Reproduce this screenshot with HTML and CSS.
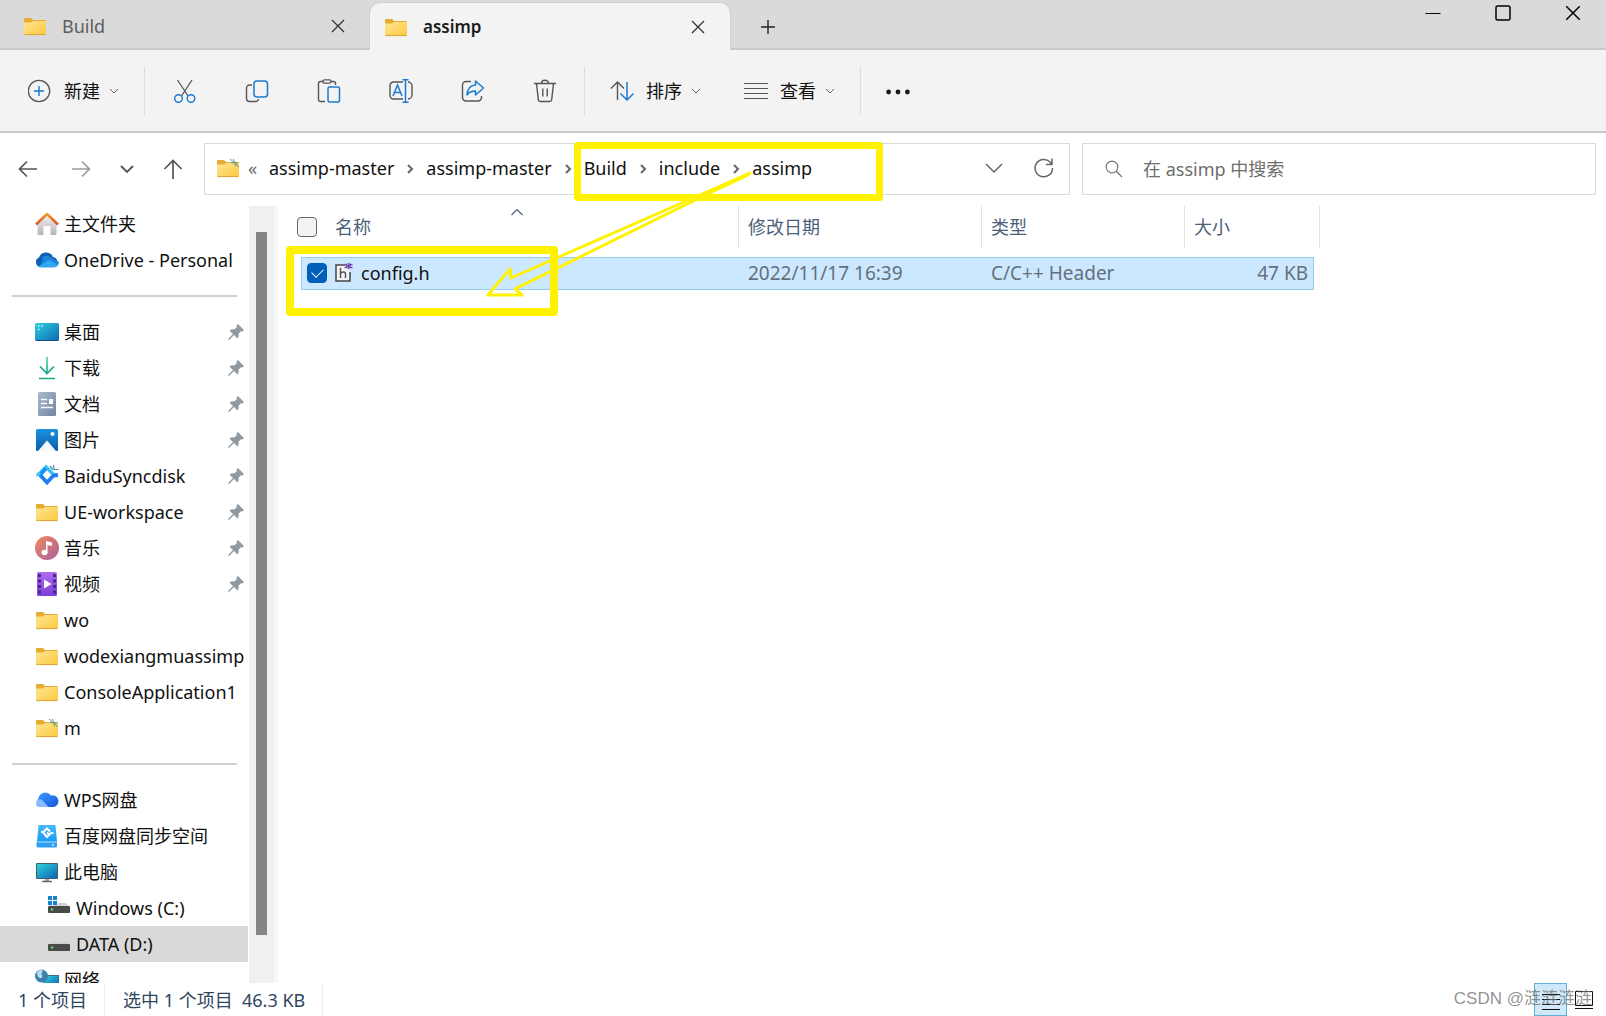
FILE: index.html
```html
<!DOCTYPE html>
<html lang="zh-CN">
<head>
<meta charset="utf-8">
<title>assimp</title>
<link rel="stylesheet" href="styles.css">
</head>
<body>
<svg class="sprite" aria-hidden="true">
  <defs>
    <linearGradient id="g-folder" x1="0" y1="0" x2="1" y2="1"><stop offset="0" stop-color="#ffe694"/><stop offset="1" stop-color="#fbc83d"/></linearGradient>
    <linearGradient id="g-desk" x1="0" y1="0" x2="1" y2="1"><stop offset="0" stop-color="#2fd0dc"/><stop offset="1" stop-color="#0c66b4"/></linearGradient>
    <linearGradient id="g-home" x1="0" y1="0" x2="0" y2="1"><stop offset="0" stop-color="#f2f2f2"/><stop offset="1" stop-color="#b5b5b8"/></linearGradient>
    <linearGradient id="g-roof" x1="0" y1="0" x2="0" y2="1"><stop offset="0" stop-color="#f59a2c"/><stop offset="1" stop-color="#d3552a"/></linearGradient>
    <linearGradient id="g-down" x1="0" y1="0" x2="0" y2="1"><stop offset="0" stop-color="#3fc9a2"/><stop offset="1" stop-color="#0a9c7c"/></linearGradient>
    <linearGradient id="g-doc" x1="0" y1="0" x2="1" y2="1"><stop offset="0" stop-color="#a9bacb"/><stop offset="1" stop-color="#6f87a3"/></linearGradient>
    <linearGradient id="g-pic" x1="0" y1="0" x2="0" y2="1"><stop offset="0" stop-color="#1a93e0"/><stop offset="1" stop-color="#0a5cab"/></linearGradient>
    <linearGradient id="g-music" x1="0" y1="0" x2="1" y2="1"><stop offset="0" stop-color="#f0885a"/><stop offset="1" stop-color="#a9609f"/></linearGradient>
    <linearGradient id="g-video" x1="0" y1="0" x2="0" y2="1"><stop offset="0" stop-color="#b06cf0"/><stop offset="1" stop-color="#7b3fd6"/></linearGradient>
    <linearGradient id="g-wps" x1="0" y1="0" x2="1" y2="1"><stop offset="0" stop-color="#3f9bff"/><stop offset="1" stop-color="#1557dd"/></linearGradient>
    <linearGradient id="g-bdisk" x1="0" y1="0" x2="0" y2="1"><stop offset="0" stop-color="#4db8fa"/><stop offset="1" stop-color="#169cf5"/></linearGradient>
  </defs>

  <symbol id="folder" viewBox="0 0 24 24">
    <path d="M1 5a1 1 0 0 1 1-1h6l2 2h12a1 1 0 0 1 1 1v3H1z" fill="#e5ad33"/>
    <path d="M1 8.500h7l2-1.500h13v13a1 1 0 0 1-1 1H2a1 1 0 0 1-1-1z" fill="url(#g-folder)"/>
    <path d="M1.500 20.600h21" stroke="#dca43a"/>
  </symbol>
  <symbol id="folder-sync" viewBox="0 0 24 24">
    <use href="#folder"/>
    <path d="M14 3l4 3.500M23 11l-4-4M17.500 3l1 3.500 3.500.5M15 6.500l4 .5.500 3.500" fill="none" stroke="#5f9a8e" stroke-width="1"/>
  </symbol>
  <symbol id="close" viewBox="0 0 16 16"><path d="M2 2l12 12M14 2L2 14" fill="none" stroke="currentColor" stroke-width="1.300"/></symbol>
  <symbol id="add" viewBox="0 0 16 16"><path d="M8 1v14M1 8h14" fill="none" stroke="currentColor" stroke-width="1.400"/></symbol>
  <symbol id="min" viewBox="0 0 16 16"><path d="M.500 8.500h15" stroke="currentColor"/></symbol>
  <symbol id="max" viewBox="0 0 16 16"><rect x="1" y="1" width="14" height="14" rx="1.500" fill="none" stroke="currentColor" stroke-width="1.500"/></symbol>
  <symbol id="chev" viewBox="0 0 12 12"><path d="M2 4l4 4 4-4" fill="none" stroke="currentColor" stroke-width="1"/></symbol>
  <symbol id="sort-up" viewBox="0 0 12 12"><path d="M.500 9L6 3.500 11.500 9" fill="none" stroke="currentColor" stroke-width="1.200"/></symbol>
  <symbol id="sep" viewBox="0 0 12 12"><path d="M4 2l4 4-4 4" fill="none" stroke="currentColor" stroke-width="2"/></symbol>

  <symbol id="new" viewBox="0 0 24 24"><circle cx="11" cy="12" r="10.700" fill="none" stroke="#555" stroke-width="1.300"/><path d="M11 7v10M6 12h10" stroke="#1a7ad0" stroke-width="1.400"/></symbol>
  <symbol id="cut" viewBox="0 0 24 24"><path d="M4.500 1l10.500 16M19 1L8.500 17" fill="none" stroke="#555" stroke-width="1.300"/><g fill="#f3f3f3" stroke="#1a7ad0" stroke-width="1.400"><circle cx="5.500" cy="19.500" r="3.800"/><circle cx="18" cy="19.500" r="3.800"/></g></symbol>
  <symbol id="copy" viewBox="0 0 24 24"><path d="M7 6H4.500a3 3 0 0 0-3 3v10.500a3 3 0 0 0 3 3h6a3 3 0 0 0 3-2.500" fill="none" stroke="#555" stroke-width="1.400"/><rect x="9" y="2" width="13.500" height="16" rx="3" fill="none" stroke="#1a7ad0" stroke-width="1.500"/></symbol>
  <symbol id="paste" viewBox="0 0 24 24"><path d="M8 22.500H3.500a2 2 0 0 1-2-2v-16a2 2 0 0 1 2-2H6m8 0h2.500a2 2 0 0 1 2 2V6" fill="none" stroke="#555" stroke-width="1.400"/><rect x="6" y=".800" width="8" height="3.400" rx="1.700" fill="none" stroke="#555" stroke-width="1.300"/><rect x="11" y="8" width="11.500" height="15" rx="1.500" fill="none" stroke="#1a7ad0" stroke-width="1.500"/></symbol>
  <symbol id="rename" viewBox="0 0 24 24"><path d="M14 3H4.500a3.500 3.500 0 0 0-3.500 3.500v10a3.500 3.500 0 0 0 3.500 3.500H14M19 3a4 4 0 0 1 4 4v9a4 4 0 0 1-4 4" fill="none" stroke="#555" stroke-width="1.400"/><path d="M4 17L8.500 6 13 17M5.500 13.500h6M16.500 1v22M13.500.700h6M13.500 23.300h6" fill="none" stroke="#1a7ad0" stroke-width="1.500"/></symbol>
  <symbol id="share" viewBox="0 0 24 24"><path d="M10 2.500H5a3.500 3.500 0 0 0-3.500 3.500v12.500A3.500 3.500 0 0 0 5 22h12a3.500 3.500 0 0 0 3.500-3.500V17" fill="none" stroke="#555" stroke-width="1.400"/><path d="M14.500 2l8 7-8 7v-4c-4 0-6.500 1-8.500 4 .3-6 3-9.500 8.500-10z" fill="none" stroke="#1a7ad0" stroke-width="1.500" stroke-linejoin="round"/></symbol>
  <symbol id="trash" viewBox="0 0 24 24"><path d="M1 4.500h22M8.500 4a3.500 2.800 0 0 1 7 0M3.500 4.500l1.800 16.200a2 2 0 0 0 2 1.800h9.400a2 2 0 0 0 2-1.800L20.500 4.500M9.800 9.500v8M14.200 9.500v8" fill="none" stroke="#555" stroke-width="1.400"/></symbol>
  <symbol id="sort" viewBox="0 0 24 24"><path d="M1 9.500L7.500 3 14 9.500M7.500 3v18" fill="none" stroke="#555" stroke-width="1.400"/><path d="M10.500 14.500L17 21l6.500-6.500M17 21V3" fill="none" stroke="#1a7ad0" stroke-width="1.500"/></symbol>
  <symbol id="view" viewBox="0 0 24 24"><path d="M0 4.500h24M0 9.500h24M0 14.500h24M0 19.500h24" stroke="#555" stroke-width="1.200"/></symbol>
  <symbol id="dots" viewBox="0 0 24 24"><g fill="#1b1b1b"><circle cx="2.600" cy="13" r="2.400"/><circle cx="12" cy="13" r="2.400"/><circle cx="21.400" cy="13" r="2.400"/></g></symbol>

  <symbol id="back" viewBox="0 0 20 20"><path d="M19 10H2M9 2.500L1.500 10 9 17.500" fill="none" stroke="currentColor" stroke-width="1.700"/></symbol>
  <symbol id="fwd" viewBox="0 0 20 20"><path d="M1 10h17M11 2.500l7.500 7.500-7.500 7.500" fill="none" stroke="currentColor" stroke-width="1.700"/></symbol>
  <symbol id="up" viewBox="0 0 20 20"><path d="M10 20V2M1.500 10L10 1.500 18.500 10" fill="none" stroke="currentColor" stroke-width="1.700"/></symbol>
  <symbol id="down" viewBox="0 0 20 20"><path d="M4 7l6 6 6-6" fill="none" stroke="currentColor" stroke-width="1.900"/></symbol>
  <symbol id="drop" viewBox="0 0 20 20"><path d="M2 6l8 8 8-8" fill="none" stroke="currentColor" stroke-width="1.500"/></symbol>
  <symbol id="refresh" viewBox="0 0 20 20"><path d="M18.500 10A8.700 8.700 0 1 1 16 4l1.500 2M18 .500V6.500h-6" fill="none" stroke="currentColor" stroke-width="1.500"/></symbol>
  <symbol id="search" viewBox="0 0 18 18"><circle cx="7" cy="7" r="5.800" fill="none" stroke="currentColor" stroke-width="1.200"/><path d="M11.300 11.300L17 17" stroke="currentColor" stroke-width="1.300"/></symbol>

  <symbol id="home" viewBox="0 0 24 24"><path d="M2.500 11L12 2.500 21.500 11v11a1 1 0 0 1-1 1H15.500v-9h-7v9H3.500a1 1 0 0 1-1-1z" fill="url(#g-home)"/><path d="M1 12.500L12 2l11 10.500" fill="none" stroke="url(#g-roof)" stroke-width="2.600" stroke-linejoin="round"/></symbol>
  <symbol id="onedrive" viewBox="0 0 24 24"><path d="M5 19a5 5 0 0 1-1-9.500A7.500 7.500 0 0 1 18 9a5.200 5.200 0 0 1 1 10z" fill="#0f5fb8"/><path d="M8 8.500c4-2 8 0 10 2L24 14a5 5 0 0 1-5 5H6z" fill="#1a83dc"/><path d="M3 18.500L14 12l9 5a5 5 0 0 1-4 2.500H5z" fill="#2fa7f2"/></symbol>
  <symbol id="desktop" viewBox="0 0 24 24"><rect y="3" width="24" height="18" rx="1.500" fill="url(#g-desk)"/><path d="M3 6h1.500M3 9.500h1.500M6.500 6H8" stroke="#c9fbff" stroke-width="1.500"/><path d="M1 20.500h22" stroke="#0d4f83"/></symbol>
  <symbol id="download" viewBox="0 0 24 24"><path d="M11.250 1h1.500v15.500h-1.500z" fill="url(#g-down)"/><path d="M5 10.500l7 7 7-7M4 22.500h16" fill="none" stroke="#18ab8a" stroke-width="1.700"/></symbol>
  <symbol id="document" viewBox="0 0 24 24"><rect x="3" y="0" width="18" height="24" rx="1.500" fill="url(#g-doc)"/><path d="M6 7.500h6M6 11.500h6M6 15.500h12" stroke="#fff" stroke-width="1.500"/><rect x="14" y="7" width="4" height="5" fill="#fff"/></symbol>
  <symbol id="picture" viewBox="0 0 24 24"><rect x="1" y="1" width="22" height="22" rx="1.500" fill="url(#g-pic)"/><path d="M3 23l9-10.500L21 23z" fill="#f2f8ff"/><circle cx="17.500" cy="6" r="2" fill="#fff"/></symbol>
  <symbol id="baidu" viewBox="0 0 24 24"><path d="M1.500 10.500c3 .5 3-1 5-3L11 3l8 8" fill="none" stroke="#39c2f5" stroke-width="3.600"/><path d="M5 11l7 7.500 6.500-7 4.500-.5" fill="none" stroke="#1f7ff0" stroke-width="3.800"/><path d="M11 4.500L6 10" stroke="#1a8df5" stroke-width="3.500"/><path d="M15 2l3 3.500M18.500 1l.500 4.500h4.500" fill="none" stroke="#4a93a8" stroke-width="1.200"/></symbol>
  <symbol id="music" viewBox="0 0 24 24"><circle cx="12" cy="12" r="12" fill="url(#g-music)"/><ellipse cx="9.500" cy="16.500" rx="3" ry="2.700" fill="#fff"/><path d="M11 5l6 1.500v3.500l-4.500-1v8H11z" fill="#fff"/></symbol>
  <symbol id="video" viewBox="0 0 24 24"><rect x="2" y="0" width="20" height="24" rx="1.500" fill="url(#g-video)"/><path d="M4.500 2v21M19.500 2v21" stroke="#4a2390" stroke-width="3" stroke-dasharray="3 2.500"/><path d="M9 7.500l7.500 4.500L9 16.500z" fill="#fff"/></symbol>
  <symbol id="wps" viewBox="0 0 24 24"><path d="M4 17a6.500 6.500 0 0 1-.5-7A7 7 0 0 1 16 7.500a5.500 5.500 0 0 1 3 11.500H9z" fill="url(#g-wps)"/><path d="M1 15.500a4 4 0 0 1 6-3.700L13.500 19H4.500A3.500 3.500 0 0 1 1 15.500z" fill="#86bcff"/></symbol>
  <symbol id="bdisk" viewBox="0 0 24 24"><path d="M3.500 1h17l1.500 17H2z" fill="url(#g-bdisk)"/><rect x="1.500" y="17.500" width="20.500" height="6" rx="1.500" fill="#2f9ff2"/><path d="M2.500 18h19" stroke="#b9e2ff"/><path d="M6 8h2.500L12 4.500l3 3M8.500 9l3.500 4 4-4h2.500M12 8.500l2 2" fill="none" stroke="#fff" stroke-width="2"/><circle cx="18" cy="21" r="1" fill="#d6f3ff"/></symbol>
  <symbol id="pc" viewBox="0 0 24 24"><rect x="1" y="3" width="22" height="16" rx="1" fill="#46606f"/><rect x="2" y="4" width="20" height="14" fill="url(#g-desk)"/><path d="M10 19h4v2h-4z" fill="#9aa4ab"/><path d="M7 21.500h10" stroke="#5d686f" stroke-width="1.500"/></symbol>
  <symbol id="drive" viewBox="0 0 24 24"><path d="M4 10h16l2.500 4h-21z" fill="#d0d0d3"/><rect x="1" y="12" width="22" height="7" rx="1" fill="#4a4a4a"/><circle cx="5" cy="15.500" r="1.300" fill="#4ddb6a"/></symbol>
  <symbol id="drive-win" viewBox="0 0 24 24"><path d="M4 7h15l3.500 4h-21z" fill="#d5d5d9"/><rect x="1" y="10" width="22" height="7" rx="1" fill="#4a4a4a"/><circle cx="5" cy="13.500" r="1.300" fill="#4ddb6a"/><path d="M.500-.500h10V9h-10z" fill="#fff"/><path d="M1 0h4v4H1zM6 0h4v4H6zM1 5h4v4H1zM6 5h4v4H6z" fill="#1681d2"/></symbol>
  <symbol id="network" viewBox="0 0 24 24"><rect x="8" y="7" width="16" height="12" fill="#3d6e86"/><rect x="9" y="8" width="14" height="10" fill="url(#g-desk)"/><circle cx="6.500" cy="8" r="6.500" fill="#3b82ad"/><path d="M2 4.500c3-4 7-3 5 0s2 3 0 5-5-1-5-5z" fill="#b9dcec"/></symbol>
  <symbol id="pin" viewBox="0 0 16 16"><path d="M10 0l6 6-1.500 1.500-1.500-.3-2.500 2.500c.5 2 0 3.500-1.200 4.800L6 11 1.500 15.500 0 16l.5-1.500L5 10 1.500 6.700C3 5.500 4.500 5 6.300 5.500L8.800 3l-.3-1.500z" fill="#929aa1"/></symbol>
  <symbol id="hfile" viewBox="0 0 20 20"><path d="M11 2H2v16h14V9" fill="#f4f4f6" stroke="#444" stroke-width="1.500"/><path d="M6.500 5v10M6.500 10.500c1.500-2 5-2 5 .5v4" fill="none" stroke="#555" stroke-width="1.500"/><path d="M10.500 1.500h2v3h-2M13 3h2M18.500 1.500h-2.500v3h2.500M14.500 0v6" fill="none" stroke="#7a4bb5" stroke-width="1.500"/></symbol>
</svg>

<div class="window">
  <header class="titlebar">
    <div class="tab">
      <svg class="i24"><use href="#folder"/></svg><span class="tab-name">Build</span>
      <button class="plain" aria-label="关闭标签页"><svg class="i16"><use href="#close"/></svg></button>
    </div>
    <div class="tab tab-active">
      <svg class="i24"><use href="#folder"/></svg><span class="tab-name">assimp</span>
      <button class="plain" aria-label="关闭标签页"><svg class="i16"><use href="#close"/></svg></button>
    </div>
    <button class="plain tab-add" aria-label="新标签页"><svg class="i16"><use href="#add"/></svg></button>
    <div class="winctl">
      <button class="plain" aria-label="最小化"><svg class="i16"><use href="#min"/></svg></button>
      <button class="plain" aria-label="最大化"><svg class="i16"><use href="#max"/></svg></button>
      <button class="plain" aria-label="关闭"><svg class="i16 x"><use href="#close"/></svg></button>
    </div>
  </header>

  <div class="toolbar" role="toolbar">
    <button class="plain tool"><svg class="i24"><use href="#new"/></svg>新建<svg class="i12"><use href="#chev"/></svg></button>
    <span class="rule"></span>
    <button class="plain tool-icon" aria-label="剪切"><svg class="i24"><use href="#cut"/></svg></button>
    <button class="plain tool-icon" aria-label="复制"><svg class="i24"><use href="#copy"/></svg></button>
    <button class="plain tool-icon" aria-label="粘贴"><svg class="i24"><use href="#paste"/></svg></button>
    <button class="plain tool-icon" aria-label="重命名"><svg class="i24"><use href="#rename"/></svg></button>
    <button class="plain tool-icon" aria-label="共享"><svg class="i24"><use href="#share"/></svg></button>
    <button class="plain tool-icon" aria-label="删除"><svg class="i24"><use href="#trash"/></svg></button>
    <span class="rule"></span>
    <button class="plain tool"><svg class="i24"><use href="#sort"/></svg>排序<svg class="i12"><use href="#chev"/></svg></button>
    <button class="plain tool"><svg class="i24"><use href="#view"/></svg>查看<svg class="i12"><use href="#chev"/></svg></button>
    <span class="rule"></span>
    <button class="plain tool-icon tool-more" aria-label="更多"><svg class="i24"><use href="#dots"/></svg></button>
  </div>

  <div class="navrow">
    <div class="navbtns">
      <button class="plain" aria-label="后退"><svg class="i20"><use href="#back"/></svg></button>
      <button class="plain dim" aria-label="前进"><svg class="i20"><use href="#fwd"/></svg></button>
      <button class="plain" aria-label="最近"><svg class="i20"><use href="#down"/></svg></button>
      <button class="plain" aria-label="向上"><svg class="i20"><use href="#up"/></svg></button>
    </div>
    <div class="address">
      <svg class="i24"><use href="#folder-sync"/></svg>
      <span class="more">«</span>
      <a href="#">assimp-master</a><svg class="sep"><use href="#sep"/></svg>
      <a href="#">assimp-master</a><svg class="sep"><use href="#sep"/></svg>
      <a href="#">Build</a><svg class="sep"><use href="#sep"/></svg>
      <a href="#">include</a><svg class="sep"><use href="#sep"/></svg>
      <a href="#">assimp</a>
      <div class="address-end">
        <button class="plain" aria-label="以前的位置"><svg class="i20"><use href="#drop"/></svg></button>
        <button class="plain" aria-label="刷新"><svg class="i20"><use href="#refresh"/></svg></button>
      </div>
    </div>
    <label class="search">
      <svg class="i18"><use href="#search"/></svg>
      <input type="text" placeholder="在 assimp 中搜索" aria-label="在 assimp 中搜索">
    </label>
  </div>

  <div class="body">
    <nav class="side">
      <a href="#"><svg class="i24"><use href="#home"/></svg>主文件夹</a>
      <a href="#"><svg class="i24"><use href="#onedrive"/></svg>OneDrive - Personal</a>
      <hr>
      <a href="#"><svg class="i24"><use href="#desktop"/></svg>桌面<svg class="pin"><use href="#pin"/></svg></a>
      <a href="#"><svg class="i24"><use href="#download"/></svg>下载<svg class="pin"><use href="#pin"/></svg></a>
      <a href="#"><svg class="i24"><use href="#document"/></svg>文档<svg class="pin"><use href="#pin"/></svg></a>
      <a href="#"><svg class="i24"><use href="#picture"/></svg>图片<svg class="pin"><use href="#pin"/></svg></a>
      <a href="#"><svg class="i24"><use href="#baidu"/></svg>BaiduSyncdisk<svg class="pin"><use href="#pin"/></svg></a>
      <a href="#"><svg class="i24"><use href="#folder"/></svg>UE-workspace<svg class="pin"><use href="#pin"/></svg></a>
      <a href="#"><svg class="i24"><use href="#music"/></svg>音乐<svg class="pin"><use href="#pin"/></svg></a>
      <a href="#"><svg class="i24"><use href="#video"/></svg>视频<svg class="pin"><use href="#pin"/></svg></a>
      <a href="#"><svg class="i24"><use href="#folder"/></svg>wo</a>
      <a href="#"><svg class="i24"><use href="#folder"/></svg>wodexiangmuassimp</a>
      <a href="#"><svg class="i24"><use href="#folder"/></svg>ConsoleApplication1</a>
      <a href="#"><svg class="i24"><use href="#folder-sync"/></svg>m</a>
      <hr>
      <a href="#"><svg class="i24"><use href="#wps"/></svg>WPS网盘</a>
      <a href="#"><svg class="i24"><use href="#bdisk"/></svg>百度网盘同步空间</a>
      <a href="#"><svg class="i24"><use href="#pc"/></svg>此电脑</a>
      <a href="#" class="sub"><svg class="i24"><use href="#drive-win"/></svg>Windows (C:)</a>
      <a href="#" class="sub current"><svg class="i24"><use href="#drive"/></svg>DATA (D:)</a>
      <a href="#"><svg class="i24"><use href="#network"/></svg>网络</a>
    </nav>
    <div class="scroll"><div class="thumb"></div></div>
    <main class="files">
      <table>
        <thead>
          <tr>
            <th class="name"><input type="checkbox" aria-label="全选">名称<svg class="i12 asc"><use href="#sort-up"/></svg></th>
            <th>修改日期</th>
            <th>类型</th>
            <th>大小</th>
          </tr>
        </thead>
        <tbody>
          <tr>
            <td class="name"><input type="checkbox" aria-label="config.h" checked><svg class="i20"><use href="#hfile"/></svg>config.h</td>
            <td>2022/11/17 16:39</td>
            <td>C/C++ Header</td>
            <td class="size">47 KB</td>
          </tr>
        </tbody>
      </table>
    </main>
  </div>

  <footer class="status">
    <span class="cell">1 个项目</span>
    <span class="cell">选中 1 个项目&nbsp; 46.3 KB</span>
    <div class="modes">
      <button class="plain on" aria-label="详细信息"><svg class="i20"><path d="M1 4.500h18M1 9.500h18M1 14.500h18M1 19.500h18" stroke="#111" stroke-width="1"/></svg></button>
      <button class="plain" aria-label="大图标"><svg class="i20"><path d="M1.500 1.500h17v14h-17zM1 18.500h18" fill="none" stroke="#111" stroke-width="1"/></svg></button>
    </div>
    <span class="mark">CSDN @涟涟涟涟</span>
  </footer>

  <svg class="notes" width="900" height="330" fill="none" stroke="#fff200" stroke-linejoin="round" aria-hidden="true">
    <rect x="577.500" y="145.500" width="302" height="52" stroke-width="7"/>
    <rect x="290" y="250" width="264" height="62" stroke-width="8"/>
    <path d="M750 173L511 278l-1-9-22 26h34l-7-6z" stroke-width="3"/>
    <path d="M749 174l-60 28" stroke-width="4"/>
  </svg>
</div>
</body>
</html>
```
FILE: styles.css
```css
* { box-sizing: border-box; }

body {
  margin: 0;
  background: #fff;
  color: #111;
  font: 18px/24px "Noto Sans", "Noto Sans CJK SC", sans-serif;
}

svg { flex: none; display: block; }
a { color: inherit; text-decoration: none; }

.sprite { position: absolute; width: 0; height: 0; }
.i12 { width: 12px; height: 12px; }
.i16 { width: 16px; height: 16px; }
.i18 { width: 18px; height: 18px; }
.i20 { width: 20px; height: 20px; }
.i24 { width: 24px; height: 24px; }

.plain {
  display: flex;
  align-items: center;
  justify-content: center;
  padding: 0;
  border: 0;
  background: none;
  color: inherit;
  font: inherit;
}

.window {
  position: relative;
  display: flex;
  flex-direction: column;
  height: 100vh;
  overflow: hidden;
}

/* Tabs */
.titlebar {
  display: flex;
  height: 50px;
  background: #dadada;
  box-shadow: inset 0 -2px #cbcbcb;
}
.tab {
  display: flex;
  align-items: center;
  gap: 15px;
  width: 370px;
  padding: 2px 24px 0 23px;
  color: #5e5e5e;
}
.tab .plain { margin-left: auto; color: #333; }
.tab-active {
  width: 360px;
  height: 47px;
  margin-top: 3px;
  padding: 0 24px 0 14px;
  border-radius: 10px 10px 0 0;
  background: #f3f3f3;
  box-shadow: 0 0 0 1px #cfcfcf;
  color: #1b1b1b;
  clip-path: inset(-1px -1px 0 -1px);
}
.tab-active .tab-name { font-size: 17px; font-weight: 600; }
.tab-add { width: 76px; padding-top: 3px; color: #222; }
.winctl { display: flex; margin-left: auto; color: #000; }
.winctl .plain { width: 70px; height: 25px; padding-left: 4px; }
.winctl .x { width: 18px; height: 18px; }

/* Command bar */
.toolbar {
  display: flex;
  align-items: center;
  height: 83px;
  padding-left: 7px;
  border-bottom: 2px solid #c9c9c9;
  background: #f3f3f3;
}
.tool { gap: 12px; height: 48px; padding: 0 21px; }
.tool .i12 { margin-left: -4px; color: #666; }
.tool-icon { width: 72px; height: 48px; }
.tool-more { width: 66px; }
.rule { width: 1px; height: 48px; margin: 0 4px 0 3px; background: #dedede; }

/* Address and search */
.navrow {
  display: flex;
  padding: 10px 10px 11px 0;
}
.navbtns {
  display: grid;
  grid-template-columns: 56px 50px 42px 50px;
  color: #555;
}
.navbtns .dim { color: #9b9b9b; }
.address, .search {
  display: flex;
  align-items: center;
  height: 52px;
  border: 1px solid #d9d9d9;
}
.address { flex: 866 1 866px; margin-left: 6px; padding: 0 15px 2px 11px; }
.more { width: 29px; padding-left: 8px; color: #666; }
.sep { width: 12px; height: 12px; margin: 2px 10px 0; color: #666; }
.address-end { display: flex; gap: 30px; margin-left: auto; color: #666; }
.search { flex: 514 1 514px; gap: 20px; margin-left: 12px; padding-left: 22px; color: #777; }
.search input {
  flex: 1;
  min-width: 0;
  padding: 0;
  border: 0;
  outline: 0;
  background: none;
  font: inherit;
}
.search input::placeholder { color: #6e6e6e; }

/* Navigation pane */
.body { display: flex; flex: 1; min-height: 0; }
.side { width: 248px; overflow: hidden; }
.side a {
  display: flex;
  align-items: center;
  gap: 5px;
  height: 36px;
  padding: 0 4px 0 35px;
  white-space: nowrap;
}
.side .sub { padding-left: 47px; }
.side .current { background: #d9d9d9; }
.side hr {
  height: 2px;
  margin: 17px 11px 17px 12px;
  border: 0;
  background: #d0d0d0;
}
.side .pin { width: 16px; height: 16px; margin-left: auto; }
.scroll {
  width: 30px;
  padding: 26px 7px 48px;
  border-left: 1px solid #fff;
  border-right: 4px solid #f7f7f7;
  background: #f0f0f0;
}
.thumb { height: 100%; background: #858585; }

/* File list */
.files { flex: 1; padding-left: 13px; }
table, thead, tbody { display: block; }
tr { display: grid; }
th, td { padding: 0 6px 0 9px; text-align: left; font-weight: 400; }
thead tr { grid-template-columns: 448px 243px 203px 135px; height: 42px; }
th {
  position: relative;
  border-right: 1px solid #e3e3e3;
  color: #4c607a;
  line-height: 42px;
}
tbody tr {
  grid-template-columns: 438px 243px 203px 129px;
  width: 1013px;
  height: 33px;
  margin: 9px 0 0 10px;
  background: #cce8ff;
  box-shadow: inset 0 0 0 1px #99cdf0;
}
td { color: #64707c; font-size: 19px; line-height: 32px; }
.name { display: flex; align-items: center; padding-left: 6px; }
td.name { gap: 7px; padding-bottom: 2px; color: #111; font-size: 18px; }
th.name { gap: 18px; }
.size { text-align: right; }
.asc { position: absolute; top: 0; left: 220px; }
input[type="checkbox"] {
  appearance: none;
  width: 20px;
  height: 20px;
  margin: 0;
  border: 1px solid #666;
  border-radius: 4px;
  background: #f3f3f3;
}
input[type="checkbox"]:checked {
  display: grid;
  place-items: center;
  border-color: #005fb8;
  background: #005fb8;
}
input[type="checkbox"]:checked::before {
  content: "";
  width: 10px;
  height: 6px;
  margin-bottom: 4px;
  border: solid #fff;
  border-width: 0 0 1px 1px;
  transform: rotate(-45deg);
}

/* Status bar */
.status {
  position: relative;
  display: flex;
  height: 33px;
  color: #2f4460;
  line-height: 35px;
}
.cell { padding: 0 17px 0 18px; border-right: 1px solid #ececec; }
.modes { display: flex; margin-left: auto; padding-right: 5px; }
.modes .plain { width: 34px; }
.modes .on { width: 33px; border: 1px solid #5fb2d8; background: #cfe9fb; }
.mark {
  position: absolute;
  right: 14px;
  top: -2px;
  color: rgba(110, 110, 110, .75);
  font-family: "Liberation Sans", "Noto Sans CJK SC", sans-serif;
  font-size: 17px;
}

/* Highlighter marks over the window */
.notes { position: absolute; top: 0; left: 0; pointer-events: none; }
```
